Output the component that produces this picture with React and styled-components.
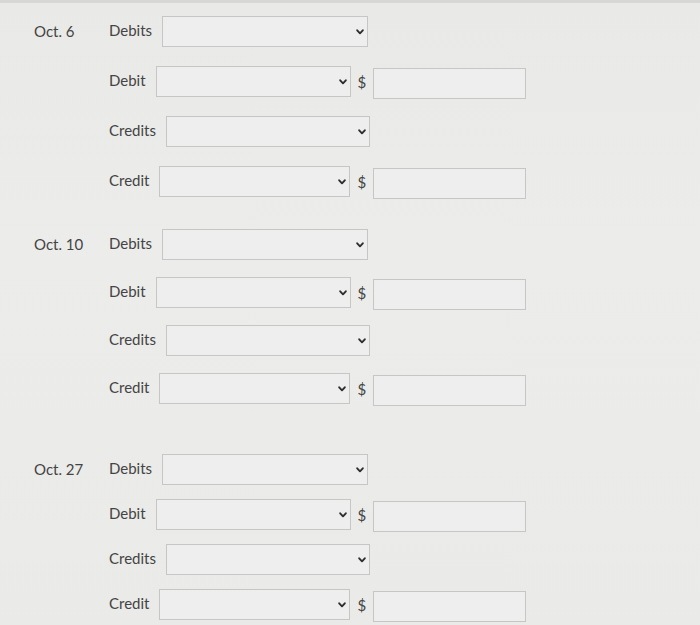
import React from "react";
import styled, { createGlobalStyle } from "styled-components";

const GlobalStyle = createGlobalStyle`
  html, body {
    margin: 0;
    padding: 0;
    background: #ebebea;
  }
  body {
    font-family: Lato, "Liberation Sans", sans-serif;
    color: #404040;
  }
`;

// the spacing shrinks a little from one entry to the next, as in the shot
const entries = [
  { date: "Oct. 6", top: 13, gap: 19 },
  { date: "Oct. 10", top: 32, gap: 17 },
  { date: "Oct. 27", top: 50, gap: 14 },
];

const rows = [
  { label: "Debits", width: 206, amount: false },
  { label: "Debit", width: 195, amount: true },
  { label: "Credits", width: 204, amount: false },
  { label: "Credit", width: 191, amount: true },
];

const Chevron = () => (
  <svg width="8" height="6" viewBox="0 0 8 6">
    <path
      d="M1.2 1.3 L4 4.3 L6.8 1.3"
      fill="none"
      stroke="#2e2e2e"
      strokeWidth="1.9"
      strokeLinecap="round"
      strokeLinejoin="round"
    />
  </svg>
);

const App = () => {
  return (
    <>
      <GlobalStyle />
      <Page>
        {entries.map((entry) => (
          <Entry key={entry.date} top={entry.top}>
            <DateLabel>{entry.date}</DateLabel>
            <Rows gap={entry.gap}>
              {rows.map((row) => (
                <Row key={row.label}>
                  <Label>{row.label}</Label>
                  <Select width={row.width}>
                    <Chevron />
                  </Select>
                  {row.amount && (
                    <>
                      <Dollar>$</Dollar>
                      <Amount />
                    </>
                  )}
                </Row>
              ))}
            </Rows>
          </Entry>
        ))}
      </Page>
    </>
  );
};

const Page = styled.div`
  width: 700px;
  height: 625px;
  box-sizing: border-box;
  overflow: hidden;
  border-top: 3px solid #d7d7d6;
  background: linear-gradient(180deg, #e9e9e8 0%, #ececeb 40%, #eaeae9 100%);
  padding-left: 34px;
  display: flex;
  flex-direction: column;
`;

const Entry = styled.div`
  display: grid;
  grid-template-columns: 75px 1fr;
  align-items: start;
  margin-top: ${(props) => props.top}px;
`;

const DateLabel = styled.div`
  font-size: 15px;
  line-height: 31px;
  color: #444;
`;

const Rows = styled.div`
  display: flex;
  flex-direction: column;
  gap: ${(props) => props.gap}px;
`;

const Row = styled.div`
  display: flex;
  align-items: center;
  height: 31px;
`;

const Label = styled.span`
  font-size: 15px;
  color: #444;
  margin-right: 10px;
  margin-top: -4px;
`;

const Select = styled.div`
  width: ${(props) => props.width}px;
  height: 31px;
  box-sizing: border-box;
  border: 1px solid #c6c6c5;
  background: #edeeed;
  display: flex;
  align-items: center;
  justify-content: flex-end;
  padding-right: 3px;
`;

const Dollar = styled.span`
  font-size: 15px;
  color: #444;
  margin: 0 7px 0 7px;
`;

const Amount = styled.div`
  width: 153px;
  height: 31px;
  box-sizing: border-box;
  border: 1px solid #c6c6c5;
  background: #edeeed;
  margin-top: 3px;
`;

export default App;
